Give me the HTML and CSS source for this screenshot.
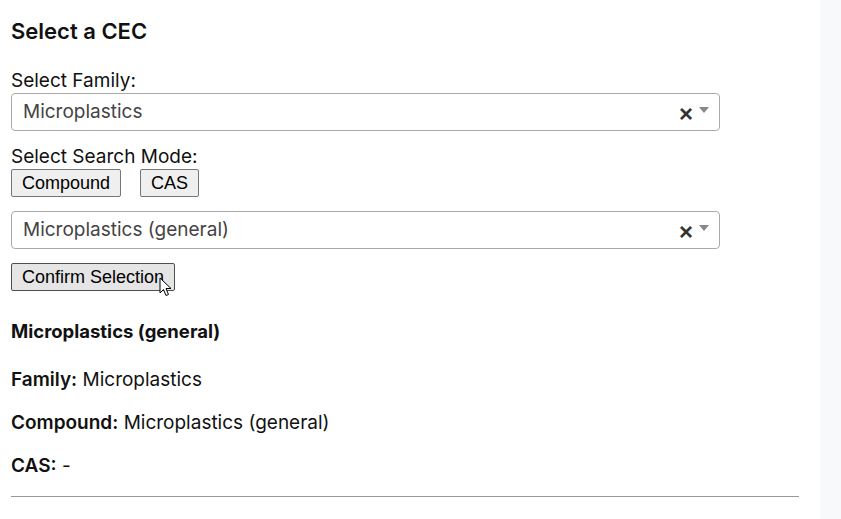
FILE: index.html
```html
<!DOCTYPE html>
<html lang="en">
<head>
<meta charset="utf-8">
<title>Select a CEC</title>
<link rel="stylesheet" href="styles.css">
</head>
<body>
<div class="page">
  <main class="main">
    <h3 class="title">Select a CEC</h3>
    <label class="label">Select Family:</label>
    <div class="select">
      <span class="select-value">Microplastics</span>
      <span class="select-clear">×</span>
      <span class="select-arrow"></span>
    </div>
    <label class="label label-mode">Select Search Mode:</label>
    <div class="modes">
      <button class="btn">Compound</button>
      <button class="btn">CAS</button>
    </div>
    <div class="select select-second">
      <span class="select-value">Microplastics (general)</span>
      <span class="select-clear">×</span>
      <span class="select-arrow"></span>
    </div>
    <div class="confirm-wrap">
      <button class="btn btn-hover">Confirm Selection</button>
      <svg class="cursor" width="13" height="20" viewBox="0 0 13 20"><path d="M1 1 L1 16 L4.5 12.5 L7 18.5 L9.5 17.5 L7 11.5 L12 11.5 Z" fill="#fff" stroke="#000" stroke-width="1" stroke-linejoin="round"/></svg>
    </div>
    <h4 class="result-title">Microplastics (general)</h4>
    <p class="detail"><strong>Family:</strong> Microplastics</p>
    <p class="detail"><strong>Compound:</strong> Microplastics (general)</p>
    <p class="detail"><strong>CAS:</strong> -</p>
    <div class="rule"></div>
  </main>
  <aside class="side"></aside>
</div>
</body>
</html>
```

FILE: styles.css
```css
html, body {
  margin: 0;
  padding: 0;
  background: #ffffff;
}
body {
  font-family: Inter, "Noto Sans", sans-serif;
  color: #111;
  font-size: 19px;
}
.page {
  display: flex;
  min-height: 519px;
}
.main {
  width: 820px;
  box-sizing: border-box;
  padding: 18px 21px 0 11px;
  display: flex;
  flex-direction: column;
  align-items: flex-start;
}
.side {
  flex: 1;
  background: #f8f9fb;
}
.title {
  margin: 0 0 26px;
  font-size: 22px;
  line-height: 26px;
  font-weight: 600;
}
.label {
  display: block;
  line-height: 22px;
  margin-bottom: 1px;
}
.label-mode {
  margin-top: 15px;
  margin-bottom: 1px;
}
.select {
  width: 709px;
  height: 38px;
  box-sizing: border-box;
  border: 1px solid #aaa;
  border-radius: 4px;
  display: flex;
  align-items: center;
  padding: 0 11px;
  color: #444;
}
.select-value {
  flex: 1;
  line-height: 22px;
}
.select-clear {
  font-family: "Liberation Sans", Arial, sans-serif;
  font-weight: 700;
  font-size: 24px;
  color: #333;
  line-height: 20px;
  margin-top: 4px;
  margin-right: 6px;
}
.select-arrow {
  width: 0;
  height: 0;
  border-left: 5px solid transparent;
  border-right: 5px solid transparent;
  border-top: 6px solid #888;
  margin-top: -4px;
  margin-right: -1px;
}
.modes {
  display: flex;
  gap: 19px;
}
.btn {
  font-family: "Liberation Sans", Arial, sans-serif;
  font-size: 18px;
  line-height: 22px;
  color: #000;
  background: #efefef;
  border: 1px solid #767676;
  border-radius: 2px;
  padding: 2px 10px;
  margin: 0;
}
.btn-hover {
  background: #e5e5e5;
  border-color: #4f4f4f;
}
.select-second {
  margin-top: 14px;
}
.confirm-wrap {
  position: relative;
  margin-top: 14px;
}
.cursor {
  position: absolute;
  left: 148px;
  top: 14px;
}
.result-title {
  margin: 28px 0 0;
  font-size: 18.5px;
  line-height: 24px;
  font-weight: 700;
}
.detail {
  margin: 25px 0 0;
  line-height: 24px;
}
.detail + .detail {
  margin-top: 19px;
}
.detail strong {
  font-weight: 600;
}
.rule {
  align-self: stretch;
  margin-top: 18px;
  border-top: 1px solid #999;
}
```
